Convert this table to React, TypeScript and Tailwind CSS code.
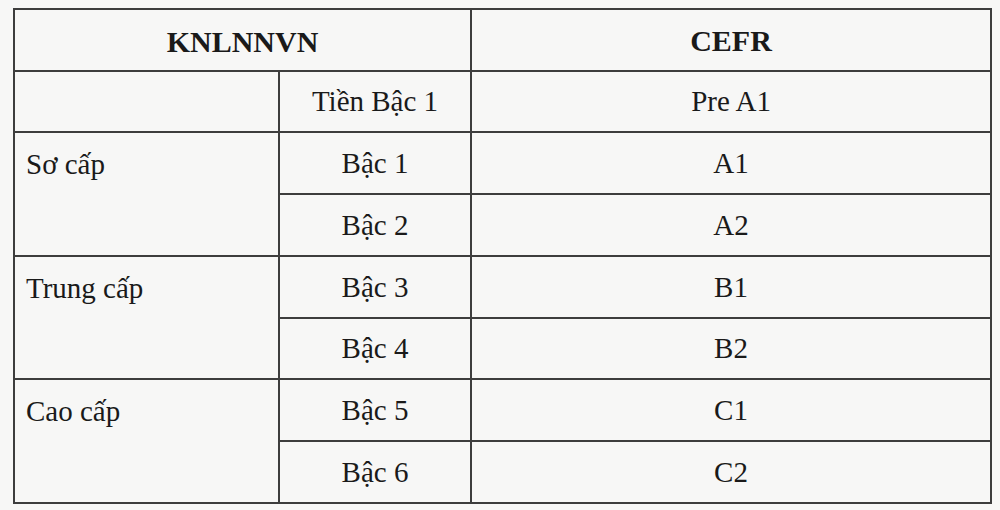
import React from "react";

const rows: { group?: string; span?: number; level: string; cefr: string }[] = [
  { group: "", span: 1, level: "Tiền Bậc 1", cefr: "Pre A1" },
  { group: "Sơ cấp", span: 2, level: "Bậc 1", cefr: "A1" },
  { level: "Bậc 2", cefr: "A2" },
  { group: "Trung cấp", span: 2, level: "Bậc 3", cefr: "B1" },
  { level: "Bậc 4", cefr: "B2" },
  { group: "Cao cấp", span: 2, level: "Bậc 5", cefr: "C1" },
  { level: "Bậc 6", cefr: "C2" },
];

export default function App() {
  return (
    <div
      className="w-[1000px] h-[510px] bg-[#f7f7f6] pl-[13px] pt-[8px] text-[#1a1a1a] overflow-hidden"
      style={{ fontFamily: '"Liberation Serif", "Times New Roman", serif' }}
    >
      <table className="table-fixed border-collapse w-[977px]">
        <colgroup>
          <col className="w-[265px]" />
          <col className="w-[192px]" />
          <col className="w-[520px]" />
        </colgroup>
        <tbody>
          <tr className="h-[61.5px]">
            <th
              colSpan={2}
              className="border-2 border-[#3d3d3d] text-[30px] font-bold text-center align-middle pt-[4px]"
            >
              KNLNNVN
            </th>
            <th className="border-2 border-[#3d3d3d] text-[30px] font-bold text-center align-middle pt-[1px]">
              CEFR
            </th>
          </tr>
          {rows.map((r, i) => (
            <tr key={i} className="h-[61.75px]">
              {r.group !== undefined && (
                <td
                  rowSpan={r.span}
                  className="border-2 border-[#3d3d3d] text-[29px] align-top pl-[11px] pt-[14px] leading-[34px]"
                >
                  {r.group}
                </td>
              )}
              <td className="border-2 border-[#3d3d3d] text-[29px] text-center align-middle leading-[34px]">
                {r.level}
              </td>
              <td className="border-2 border-[#3d3d3d] text-[29px] text-center align-middle leading-[34px]">
                {r.cefr}
              </td>
            </tr>
          ))}
        </tbody>
      </table>
    </div>
  );
}
